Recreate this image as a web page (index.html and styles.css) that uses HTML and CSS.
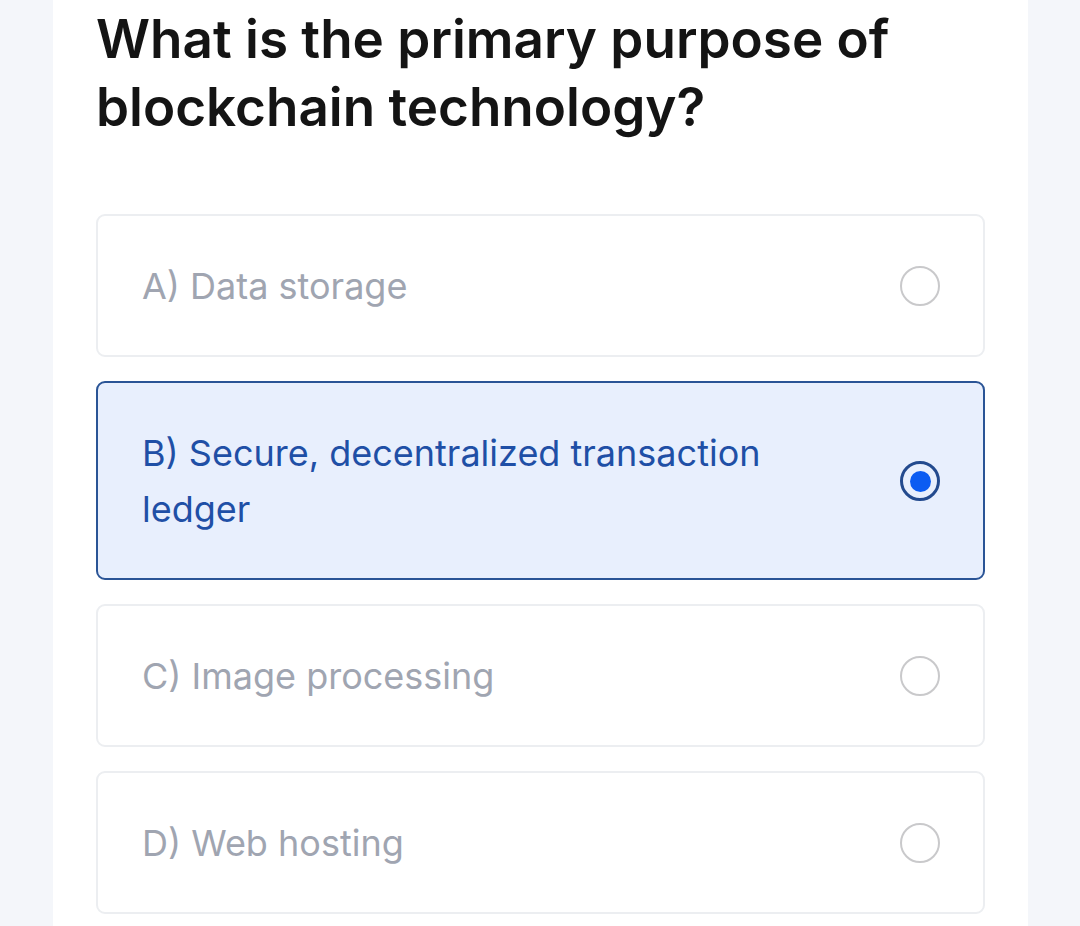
FILE: index.html
```html
<!DOCTYPE html>
<html lang="en">
<head>
<meta charset="utf-8">
<title>Quiz</title>
<link rel="stylesheet" href="styles.css">
</head>
<body>
<main class="card">
  <h1 class="question">What is the primary purpose of blockchain technology?</h1>
  <div class="options">
    <label class="option">
      <span class="option-text">A) Data storage</span>
      <span class="radio"></span>
    </label>
    <label class="option selected">
      <span class="option-text">B) Secure, decentralized transaction ledger</span>
      <span class="radio"><span class="dot"></span></span>
    </label>
    <label class="option">
      <span class="option-text">C) Image processing</span>
      <span class="radio"></span>
    </label>
    <label class="option">
      <span class="option-text">D) Web hosting</span>
      <span class="radio"></span>
    </label>
  </div>
</main>
</body>
</html>
```
FILE: styles.css
```css
html, body {
  margin: 0;
  padding: 0;
}
body {
  background: #f4f6fa;
  font-family: "Inter", "Liberation Sans", sans-serif;
  min-height: 926px;
}
.card {
  width: 975px;
  margin-left: 53px;
  background: #ffffff;
  min-height: 926px;
  box-sizing: border-box;
  padding: 5px 43px 20px 43px;
}
.question {
  margin: 0;
  font-size: 53px;
  line-height: 68px;
  font-weight: 600;
  color: #141414;
  width: 860px;
}
.options {
  margin-top: 73px;
  display: flex;
  flex-direction: column;
  gap: 24px;
}
.option {
  display: flex;
  align-items: center;
  gap: 40px;
  border: 2px solid #eceef1;
  border-radius: 9px;
  padding: 42px 43px 41px 44px;
  background: #ffffff;
}
.option-text {
  flex: 1;
  font-size: 36px;
  line-height: 56px;
  color: #a0a5b1;
  font-weight: 400;
}
.radio {
  flex: none;
  width: 40px;
  height: 40px;
  box-sizing: border-box;
  border: 2px solid #c9c9cb;
  border-radius: 50%;
  display: flex;
  align-items: center;
  justify-content: center;
}
.option.selected {
  background: #e8effd;
  border-color: #2a5496;
}
.option.selected .option-text {
  color: #1f4fa6;
}
.option.selected .radio {
  border: 3px solid #234a8e;
}
.dot {
  width: 21px;
  height: 21px;
  border-radius: 50%;
  background: #0b5cf2;
}
```
